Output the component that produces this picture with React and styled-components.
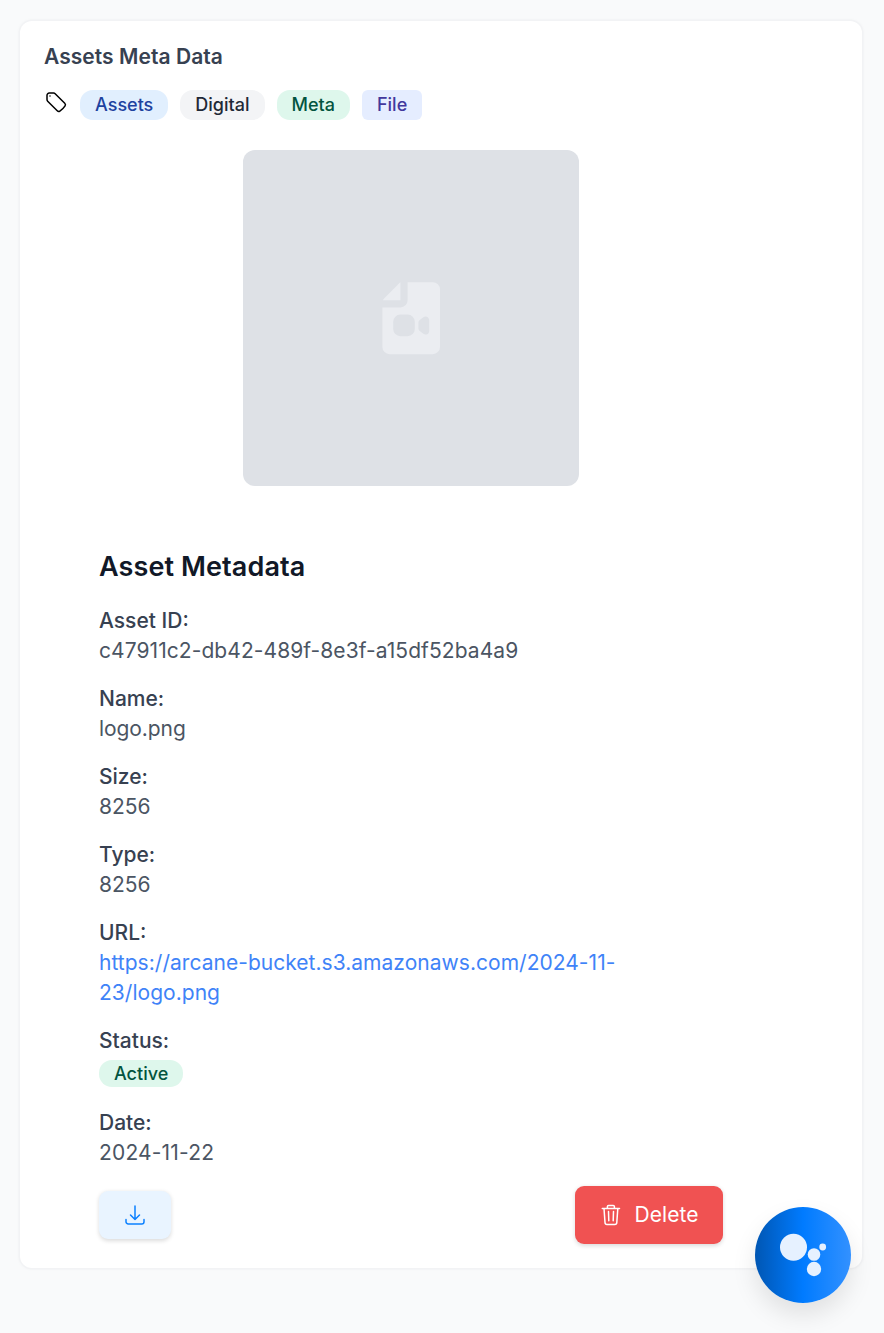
import React from "react";
import styled, { createGlobalStyle, css } from "styled-components";
import { HiOutlineArrowDownTray, HiOutlineTag } from "react-icons/hi2";

const GlobalStyle = createGlobalStyle`
  *, *::before, *::after { box-sizing: border-box; }
  html, body { margin: 0; padding: 0; }
  body {
    background: #f9fafb;
    font-family: Inter, "Liberation Sans", sans-serif;
    font-size: 21px;
    line-height: 30px;
    color: #374151;
    overflow: hidden;
  }
`;

const Page = styled.main`
  height: 1333px;
  padding: 21px 22px 0 20px;
`;

const Card = styled.section`
  height: 1247px;
  padding: 21px 24px;
  background: #fff;
  border-radius: 12px;
  box-shadow: 0 0 0 1.5px #f2f3f5, 0 0 4px rgba(0, 0, 0, 0.06);
`;

const CardTitle = styled.h2`
  margin: 0;
  font-size: 21px;
  line-height: 30px;
  font-weight: 600;
  letter-spacing: 0.05px;
`;

const TagRow = styled.div`
  display: flex;
  align-items: flex-start;
  gap: 12px;
  margin-top: 18px;
  svg { color: #000; }
`;

const tones = {
  blue: css`background: #e1effe; color: #1e429f;`,
  gray: css`background: #f3f4f6; color: #1f2937;`,
  green: css`background: #def7ec; color: #03543f;`,
  indigo: css`background: #e5edff; color: #42389d;`,
};

const Badge = styled.span`
  display: inline-flex;
  align-items: center;
  height: ${(p) => (p.$compact ? "27px" : "30px")};
  padding: 0 15px;
  border-radius: ${(p) => (p.$square ? "6px" : "13px")};
  font-size: 18px;
  line-height: 24px;
  font-weight: 500;
  ${(p) => tones[p.$tone]}
`;

const Preview = styled.div`
  display: flex;
  align-items: center;
  justify-content: center;
  width: 336px;
  height: 336px;
  margin: 30px 0 0 199px;
  border-radius: 12px;
  background: #dee1e6;
  color: #ebedf1;
`;

const Details = styled.div`
  width: 624px;
  margin: 60px 0 0 55px;
`;

const DetailsTitle = styled.h3`
  margin: 0 0 18px;
  font-size: 27px;
  line-height: 42px;
  font-weight: 600;
  letter-spacing: 0.1px;
  color: #111827;
`;

const FieldList = styled.dl`
  display: flex;
  flex-direction: column;
  gap: 18px;
  margin: 0;
`;

const Label = styled.dt`
  font-weight: 500;
`;

const Value = styled.dd`
  display: flex;
  width: 530px;
  margin: 0;
  padding: ${(p) => (p.$badge ? "4px 0 3px" : "0")};
  letter-spacing: ${(p) => p.$tracking || 0}px;
  color: #4b5563;
`;

const Link = styled.a`
  color: #3f83f8;
`;

const Actions = styled.div`
  display: flex;
  justify-content: space-between;
  align-items: center;
  margin-top: 18px;
`;

const Button = styled.button`
  display: flex;
  align-items: center;
  justify-content: center;
  border: 0;
  font: inherit;
  box-shadow: 0 1.5px 4px rgba(0, 0, 0, 0.14);
`;

const DownloadButton = styled(Button)`
  width: 72px;
  height: 48px;
  border-radius: 9px;
  background: #e9f4ff;
  color: #0b80ff;
`;

const DeleteButton = styled(Button)`
  width: 148px;
  height: 58px;
  gap: 11px;
  border-radius: 9px;
  background: #f05252;
  color: #fff;
  letter-spacing: 0.1px;
`;

const AssistantButton = styled.button`
  position: fixed;
  right: 33px;
  bottom: 30px;
  width: 96px;
  height: 96px;
  padding: 0;
  border: 0;
  border-radius: 50%;
  background: linear-gradient(90deg, #0056b3 0%, #007bff 50%, #3391ff 100%);
  box-shadow: 0 12px 24px rgba(0, 0, 0, 0.1);
  svg { display: block; }
`;

const VideoFileIcon = () => (
  <svg width="86.4" height="86.4" viewBox="0 0 24 24" fill="currentColor">
    <path
      fillRule="evenodd"
      d="M9 2v5H4.15a2 2 0 0 1 .44-.6L8.4 2.6A2 2 0 0 1 9 2ZM11 2v5a2 2 0 0 1-2 2H4v11a2 2 0 0 0 2 2h12a2 2 0 0 0 2-2V4a2 2 0 0 0-2-2h-7ZM9 11a2 2 0 0 0-2 2v2a2 2 0 0 0 2 2h2a2 2 0 0 0 2-2v-2a2 2 0 0 0-2-2H9Zm5 2.3v1.5c0 .3.14.6.38.78l1 .77c.66.51 1.62.04 1.62-.8v-3.04c0-.83-.96-1.3-1.62-.79l-1 .77a1 1 0 0 0-.38.8Z"
    />
  </svg>
);

const TrashIcon = () => (
  <svg
    width="24"
    height="24"
    viewBox="0 0 24 24"
    fill="none"
    stroke="currentColor"
    strokeWidth="1.5"
    strokeLinecap="round"
    strokeLinejoin="round"
  >
    <path d="M3.3 5.5h17.2M5 5.5l1 14a2 2 0 0 0 2 1.9h7.8a2 2 0 0 0 2-1.9l1-14M8.4 5.3V3.6a1.2 1.2 0 0 1 1.2-1.2h4.6a1.2 1.2 0 0 1 1.2 1.2v1.7M9.5 8.5l.3 9.3M14.5 8.5l-.3 9.3" />
  </svg>
);

const BubblesIcon = () => (
  <svg width="96" height="96" viewBox="0 0 96 96" fill="#e6f1ff">
    <circle cx="38.5" cy="40.2" r="13.5" />
    <circle cx="59" cy="47.5" r="6.3" />
    <circle cx="59" cy="62" r="7.2" />
    <circle cx="67.7" cy="40" r="3.4" />
  </svg>
);

const fields = [
  { label: "Asset ID:", value: "c47911c2-db42-489f-8e3f-a15df52ba4a9", tracking: 0.07 },
  { label: "Name:", value: "logo.png", tracking: -0.08 },
  { label: "Size:", value: "8256" },
  { label: "Type:", value: "8256" },
  {
    label: "URL:",
    value: <Link>https://arcane-bucket.s3.amazonaws.com/2024-11-23/logo.png</Link>,
    tracking: 0.03,
  },
  {
    label: "Status:",
    value: <Badge $tone="green" $compact>Active</Badge>,
    badge: true,
  },
  { label: "Date:", value: "2024-11-22", tracking: 0.17 },
];

export default function App() {
  return (
    <>
      <GlobalStyle />
      <Page>
        <Card>
          <CardTitle>Assets Meta Data</CardTitle>
          <TagRow>
            <HiOutlineTag size={24} />
            <Badge $tone="blue">Assets</Badge>
            <Badge $tone="gray">Digital</Badge>
            <Badge $tone="green">Meta</Badge>
            <Badge $tone="indigo" $square>File</Badge>
          </TagRow>
          <Preview>
            <VideoFileIcon />
          </Preview>
          <Details>
            <DetailsTitle>Asset Metadata</DetailsTitle>
            <FieldList>
              {fields.map(({ label, value, tracking, badge }) => (
                <div key={label}>
                  <Label>{label}</Label>
                  <Value $tracking={tracking} $badge={badge}>{value}</Value>
                </div>
              ))}
            </FieldList>
            <Actions>
              <DownloadButton aria-label="Download">
                <HiOutlineArrowDownTray size={24} />
              </DownloadButton>
              <DeleteButton>
                <TrashIcon />
                Delete
              </DeleteButton>
            </Actions>
          </Details>
        </Card>
      </Page>
      <AssistantButton aria-label="Assistant">
        <BubblesIcon />
      </AssistantButton>
    </>
  );
}
